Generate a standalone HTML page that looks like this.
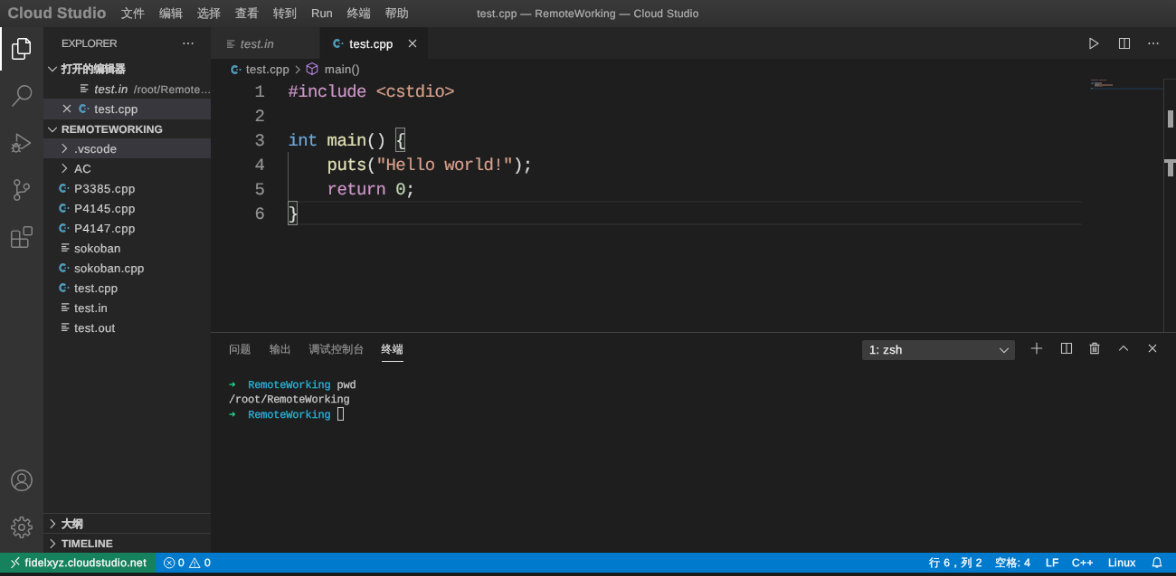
<!DOCTYPE html>
<html lang="zh">
<head>
<meta charset="utf-8">
<title>test.cpp — RemoteWorking — Cloud Studio</title>
<style>
*{box-sizing:border-box;margin:0;padding:0}
html,body{width:1176px;height:576px;overflow:hidden;background:#1b1b1b}
body{font-family:"Liberation Sans",sans-serif;font-size:13px;color:#ccc;-webkit-text-stroke:.18px}
#wb{position:absolute;left:0;top:0;width:1300px;height:637px;transform:scale(0.904615);transform-origin:0 0;background:#1b1b1b;overflow:hidden;will-change:transform;text-rendering:geometricPrecision}
.abs{position:absolute}
svg{display:block;position:absolute;overflow:visible}
/* title bar */
#title{left:0;top:0;width:1300px;height:30px;background:linear-gradient(#3a3a3a,#2f2f2f);color:#ccc}
#logo{left:8.5px;top:0;height:30px;line-height:30px;font-weight:bold;font-size:17px;letter-spacing:.28px;color:#8f8f8f;-webkit-text-stroke:.35px #8f8f8f;white-space:nowrap}
#menu{left:126px;top:0;height:30px;display:flex}
#menu div{padding:0 8px;line-height:30px;font-size:13px;color:#bdbdbd;white-space:nowrap}
#wtitle{left:0;top:0;width:1300px;text-align:center;line-height:30px;font-size:12px;letter-spacing:.3px;color:#b4b4b4}
/* activity bar */
#act{left:0;top:30px;width:48px;height:581px;background:#333}
#act svg{left:12px;width:24px;height:24px}
#act .on{position:absolute;left:0;top:0;width:2px;height:48px;background:#fff}
/* side bar */
#side{left:48px;top:30px;width:185px;height:581px;background:#252526;overflow:hidden}
.row{position:absolute;left:0;width:185px;height:22px;line-height:22px;white-space:nowrap;color:#ccc;font-size:13px;letter-spacing:.33px}
.row span{position:absolute;top:.6px}
.row svg{top:0}
.hd{font-weight:bold;font-size:12px;letter-spacing:.1px}
.sel{background:#37373d}
.bt{border-top:1px solid #3c3c3d}
/* editor */
#ed{left:233px;top:30px;width:1067px;height:336.7px;background:#1e1e1e;overflow:hidden}
#tabs{left:0;top:0;width:1067px;height:35px;background:#252526}
.tab{position:absolute;top:0;height:35px;line-height:35px;font-size:13px;letter-spacing:.33px;white-space:nowrap}
.tab span{position:absolute;top:1px}
#bc{left:0;top:35px;width:1067px;height:22px;line-height:22px;color:#a9a9a9;font-size:13px;letter-spacing:.33px;white-space:nowrap}
#bc span{position:absolute;top:1px}
#code{left:0;top:57px;width:1067px;height:281px;font-family:"Liberation Mono",monospace;font-size:19px;letter-spacing:-.6px;line-height:27px;color:#dcdcdc;white-space:pre;-webkit-text-stroke:.2px}
.ln{position:absolute;left:0;width:59.3px;margin-top:1.6px;text-align:right;color:#939393}
.cl{position:absolute;left:85.4px;margin-top:1.7px}
.k{color:#cd95c9}.s{color:#d69f8a}.b{color:#6ba8dc}.f{color:#e1e1b5}.n{color:#bed5b3}
.bm{position:absolute;width:10.8px;height:27px;border:1px solid #888;background:rgba(110,140,110,.1)}
/* panel */
#panel{left:233px;top:366.7px;width:1067px;height:244.3px;background:#1e1e1e;border-top:1px solid #414141}
#ptabs span{position:absolute;top:1.3px;line-height:35px;font-size:12px;letter-spacing:.2px;color:#969696;white-space:nowrap}
#term{left:20px;top:50.3px;font-family:"Liberation Mono",monospace;font-size:12px;letter-spacing:-.17px;line-height:16px;color:#ccc;white-space:pre;-webkit-text-stroke:.25px}
.g{color:#23d18b}.c{color:#29b8db}
/* status */
#status{left:0;top:611px;width:1300px;height:22px;background:#007acc;color:#fff;font-size:12px;letter-spacing:.4px;line-height:22px;white-space:nowrap;-webkit-text-stroke:.3px}
#status span{position:absolute;top:0}
</style>
</head>
<body>

<svg width="0" height="0" style="position:absolute">
<defs>
<symbol id="cpp" viewBox="0 0 16 22">
  <path d="M11.05 8.5A3.2 3.85 0 1 0 11.05 13.5" fill="none" stroke="#519aba" stroke-width="2.5"/>
  <path d="M10.3 11H11.9M11.1 10.2V11.8M13.4 11H15.6M14.5 9.9V12.1" stroke="#519aba" stroke-width="1.1"/>
</symbol>
<symbol id="txt" viewBox="0 0 16 22">
  <path d="M7 6.9H15.4M7 9.6H12.2M7 11.9H15.4M7 14.3H13.4" stroke="#c5c5c5" stroke-width="1.25"/>
</symbol>
<symbol id="txt2" viewBox="0 0 16 22">
  <path d="M7 6.9H15.4M7 9.6H12.2M7 11.9H15.4M7 14.3H13.4" stroke="#c5c5c5" stroke-width="1.05"/>
</symbol>
<symbol id="chd" viewBox="0 0 16 16">
  <path d="M3.2 5.8L8 10.6L12.8 5.8" fill="none" stroke="#c5c5c5" stroke-width="1.1"/>
</symbol>
<symbol id="chr" viewBox="0 0 16 16">
  <path d="M5.8 3.2L10.6 8L5.8 12.8" fill="none" stroke="#c5c5c5" stroke-width="1.1"/>
</symbol>
<symbol id="x" viewBox="0 0 16 16">
  <path d="M4 4L12 12M12 4L4 12" fill="none" stroke="#c5c5c5" stroke-width="1.1"/>
</symbol>
<symbol id="split" viewBox="0 0 16 16">
  <path d="M2.5 2.5H13.5V13.5H2.5ZM8 2.5V13.5" fill="none" stroke="#c5c5c5" stroke-width="1.1" stroke-linejoin="round"/>
</symbol>
</defs>
</svg>

<div id="wb">
<div id="title" class="abs">
<div id="wtitle" class="abs">test.cpp — RemoteWorking — Cloud Studio</div>
<div id="logo" class="abs">Cloud Studio</div>
<div id="menu" class="abs"><div>文件</div><div>编辑</div><div>选择</div><div>查看</div><div>转到</div><div>Run</div><div>终端</div><div>帮助</div></div>
</div>
<div id="act" class="abs"><div class="on"></div>
<svg style="top:12px" viewBox="0 0 24 24"><path fill="#fff" d="M17.5 0h-9L7 1.5V6H2.5L1 7.5v15.07L2.5 24h12.07L16 22.57V18h4.7l1.3-1.43V4.5L17.5 0zm0 2.12l2.38 2.38H17.5V2.12zm-3 20.38h-12v-15H7v9.07L8.5 18h6v4.5zm6-6h-12v-15H16V6h4.5v10.5z"/></svg>
<svg style="top:64px" viewBox="0 0 24 24"><path fill="#858585" d="M15.25 0a8.25 8.25 0 0 0-6.18 13.72L1 22.88l1.12 1.12 8.05-9.12A8.251 8.251 0 1 0 15.25.01V0zm0 15a6.75 6.75 0 1 1 0-13.5 6.75 6.75 0 0 1 0 13.5z"/></svg>
<svg style="top:116px" viewBox="0 0 24 24"><g fill="none" stroke="#858585" stroke-width="1.5" stroke-linejoin="round">
<path d="M6.5 10.5V2.2L21.5 12L11.5 18.6"/>
<ellipse cx="5.8" cy="17.8" rx="3.3" ry="4.1"/>
<path d="M3.2 16H8.8M0.6 17.8H3M9 17.8H11.4M1.2 13.6L3.4 15.2M10.8 13.6L8.6 15.2M1.2 22L3.6 20.2M10.8 22L8.4 20.2M4.2 13.8C4.4 12.2 7.6 12.2 7.8 13.8"/>
</g></svg>
<svg style="top:168px" viewBox="0 0 24 24"><path fill="#858585" d="M21.007 8.222A3.738 3.738 0 0 0 15.045 5.2a3.737 3.737 0 0 0 1.156 6.583 2.988 2.988 0 0 1-2.668 1.67h-2.99a4.456 4.456 0 0 0-2.989 1.165V7.4a3.737 3.737 0 1 0-1.494 0v9.117a3.776 3.776 0 1 0 1.816.099 2.99 2.99 0 0 1 2.668-1.667h2.99a4.484 4.484 0 0 0 4.223-3.039 3.736 3.736 0 0 0 3.25-3.687zM4.565 3.738a2.242 2.242 0 1 1 4.484 0 2.242 2.242 0 0 1-4.484 0zm4.484 16.441a2.242 2.242 0 1 1-4.484 0 2.242 2.242 0 0 1 4.484 0zm8.221-9.715a2.242 2.242 0 1 1 0-4.485 2.242 2.242 0 0 1 0 4.485z"/></svg>
<svg style="top:220px" viewBox="0 0 24 24"><path fill="#858585" d="M13.5 1.5L15 0h7.5L24 1.5V9l-1.5 1.5H15L13.5 9V1.5zm1.5 0V9h7.5V1.5H15zM0 15V6l1.5-1.5H9L10.5 6v7.5H18l1.5 1.5v7.5L18 24H1.5L0 22.5V15zm9-1.5V6H1.5v7.5H9zM9 15H1.5v7.5H9V15zm1.5 7.5H18V15h-7.5v7.5z"/></svg>
<svg style="top:489px" viewBox="0 0 24 24"><g fill="none" stroke="#858585" stroke-width="1.5">
<circle cx="12" cy="12" r="11.2"/><circle cx="12" cy="9.4" r="4.3"/><path d="M4.6 20.2C5.6 12.6 18.4 12.6 19.4 20.2"/></g></svg>
<svg style="top:541px" viewBox="0 0 24 24"><g fill="none" stroke="#858585" stroke-width="1.5" stroke-linejoin="round">
<path d="M19.94 9.96 L23.19 10.41 L23.19 13.59 L19.94 14.04 L19.06 16.17 L21.04 18.78 L18.78 21.04 L16.17 19.06 L14.04 19.94 L13.59 23.19 L10.41 23.19 L9.96 19.94 L7.83 19.06 L5.22 21.04 L2.96 18.78 L4.94 16.17 L4.06 14.04 L0.81 13.59 L0.81 10.41 L4.06 9.96 L4.94 7.83 L2.96 5.22 L5.22 2.96 L7.83 4.94 L9.96 4.06 L10.41 0.81 L13.59 0.81 L14.04 4.06 L16.17 4.94 L18.78 2.96 L21.04 5.22 L19.06 7.83Z"/><circle cx="12" cy="12" r="3.2"/></g></svg>
</div>
<div id="side" class="abs">
<div class="row" style="top:0;height:35px;line-height:35px;font-size:12px;letter-spacing:-.52px;color:#bbb"><span style="left:20px;top:1.2px">EXPLORER</span><svg style="left:152px;top:9.5px" width="16" height="16" viewBox="0 0 16 16"><g fill="#c5c5c5"><circle cx="3.4" cy="8" r="1"/><circle cx="8" cy="8" r="1"/><circle cx="12.6" cy="8" r="1"/></g></svg></div>
<div class="row hd" style="top:35px"><svg style="left:2px;top:3px" width="16" height="16" ><use href="#chd"/></svg><span style="left:20px;top:.1px;letter-spacing:-.2px">打开的编辑器</span></div>
<div class="row" style="top:57px"><svg style="left:34.3px;top:0px" width="16" height="22" ><use href="#txt"/></svg><span style="left:56.5px;font-style:italic">test.in</span><span style="left:100px;font-size:12px;color:#a3a3a3;letter-spacing:.35px">/root/Remote…</span></div>
<div class="row sel" style="top:79px"><svg style="left:18px;top:3px" width="16" height="16" ><use href="#x"/></svg><svg style="left:34.5px;top:0px" width="16" height="22" ><use href="#cpp"/></svg><span style="left:56.5px">test.cpp</span></div>
<div class="row hd bt" style="top:101px"><svg style="left:2px;top:3px" width="16" height="16" ><use href="#chd"/></svg><span style="left:20px;top:.3px">REMOTEWORKING</span></div>
<div class="row sel" style="top:123px"><svg style="left:14.8px;top:3px" width="16" height="16" ><use href="#chr"/></svg><span style="left:34.2px">.vscode</span></div>
<div class="row" style="top:145px"><svg style="left:14.8px;top:3px" width="16" height="16" ><use href="#chr"/></svg><span style="left:34.2px">AC</span></div>
<div class="row" style="top:167px"><svg style="left:12.7px;top:0px" width="16" height="22" ><use href="#cpp"/></svg><span style="left:34.2px;letter-spacing:.62px">P3385.cpp</span></div>
<div class="row" style="top:189px"><svg style="left:12.7px;top:0px" width="16" height="22" ><use href="#cpp"/></svg><span style="left:34.2px;letter-spacing:.62px">P4145.cpp</span></div>
<div class="row" style="top:211px"><svg style="left:12.7px;top:0px" width="16" height="22" ><use href="#cpp"/></svg><span style="left:34.2px;letter-spacing:.62px">P4147.cpp</span></div>
<div class="row" style="top:233px"><svg style="left:13.0px;top:0px" width="16" height="22" ><use href="#txt"/></svg><span style="left:34.2px">sokoban</span></div>
<div class="row" style="top:255px"><svg style="left:12.7px;top:0px" width="16" height="22" ><use href="#cpp"/></svg><span style="left:34.2px">sokoban.cpp</span></div>
<div class="row" style="top:277px"><svg style="left:12.7px;top:0px" width="16" height="22" ><use href="#cpp"/></svg><span style="left:34.2px">test.cpp</span></div>
<div class="row" style="top:299px"><svg style="left:13.0px;top:0px" width="16" height="22" ><use href="#txt"/></svg><span style="left:34.2px">test.in</span></div>
<div class="row" style="top:321px"><svg style="left:13.0px;top:0px" width="16" height="22" ><use href="#txt"/></svg><span style="left:34.2px">test.out</span></div>
<div class="row hd bt" style="top:537.4px"><svg style="left:2px;top:3px" width="16" height="16" ><use href="#chr"/></svg><span style="left:20px;top:-.4px">大纲</span></div>
<div class="row hd bt" style="top:559.4px"><svg style="left:2px;top:3px" width="16" height="16" ><use href="#chr"/></svg><span style="left:20px;top:-.3px">TIMELINE</span></div>
</div>
<div id="ed" class="abs">
<div id="tabs" class="abs">
<div class="tab" style="left:0;width:119.5px;background:#2c2c2c;color:#999"><svg style="left:11px;top:7.5px" width="16" height="22" opacity=".7"><use href="#txt2"/></svg><span style="left:33px;font-style:italic">test.in</span></div>
<div class="tab" style="left:120.5px;width:119px;background:#1e1e1e;color:#fff"><svg style="left:10.5px;top:7px" width="16" height="22" ><use href="#cpp"/></svg><span style="left:33px">test.cpp</span><svg style="left:94px;top:9.5px" width="16" height="16" ><use href="#x"/></svg></div>
<svg style="left:968px;top:9.5px" width="16" height="16" viewBox="0 0 16 16"><path d="M4 2.3L13 8L4 13.7Z" fill="none" stroke="#c5c5c5" stroke-width="1.1" stroke-linejoin="round"/></svg>
<svg style="left:1001.5px;top:9.5px" width="16" height="16" ><use href="#split"/></svg>
<svg style="left:1033.5px;top:9.5px" width="16" height="16" viewBox="0 0 16 16"><g fill="#c5c5c5"><circle cx="3.4" cy="8" r="1"/><circle cx="8" cy="8" r="1"/><circle cx="12.6" cy="8" r="1"/></g></svg>
</div>
<div id="bc" class="abs">
<svg style="left:17.5px;top:0.5px" width="16" height="22" ><use href="#cpp"/></svg>
<span style="left:39px">test.cpp</span>
<svg style="left:88px;top:3.5px" width="16" height="16" viewBox="0 0 16 16" opacity=".75"><path d="M6 3.8L10.2 8L6 12.2" fill="none" stroke="#c5c5c5" stroke-width="1.1"/></svg>
<svg style="left:104px;top:3.3px" width="16" height="16" viewBox="0 0 16 16"><path d="M8 1.6L13.8 4.6V11.2L8 14.4L2.2 11.2V4.6ZM2.4 4.7L8 7.7L13.6 4.7M8 7.7V14.2" fill="none" stroke="#b180d7" stroke-width="1.1" stroke-linejoin="round"/></svg>
<span style="left:126px">main()</span>
</div>
<div id="code" class="abs">
<div class="abs" style="left:85.4px;top:135px;width:878px;height:27px;border-top:2px solid #282828;border-bottom:2px solid #282828"></div>
<div class="abs" style="left:85.4px;top:81px;width:1px;height:54px;background:#585858"></div>
<div class="bm" style="left:204.2px;top:54px"></div>
<div class="bm" style="left:85.4px;top:135px"></div>
<div class="ln" style="top:0px">1</div><div class="cl" style="top:0px"><span class="k">#include</span> <span class="s">&lt;cstdio&gt;</span></div>
<div class="ln" style="top:27px">2</div><div class="cl" style="top:27px"></div>
<div class="ln" style="top:54px">3</div><div class="cl" style="top:54px"><span class="b">int</span> <span class="f">main</span>() {</div>
<div class="ln" style="top:81px">4</div><div class="cl" style="top:81px">    <span class="f">puts</span>(<span class="s">"Hello world!"</span>);</div>
<div class="ln" style="top:108px">5</div><div class="cl" style="top:108px">    <span class="k">return</span> <span class="n">0</span>;</div>
<div class="ln" style="top:135px">6</div><div class="cl" style="top:135px">}</div>
</div>
<div class="abs" style="left:972px;top:57px;width:81px;height:281px"><div class="abs" style="left:0;top:9.5px;width:81px;height:2px;background:#264f78;opacity:.3"></div><div class="abs" style="left:1px;top:.5px;width:8px;height:1.5px;background:#c586c0;opacity:.38"></div><div class="abs" style="left:10px;top:.5px;width:8px;height:1.5px;background:#ce9178;opacity:.38"></div><div class="abs" style="left:1px;top:4.3px;width:3px;height:1.4px;background:#569cd6;opacity:.38"></div><div class="abs" style="left:5px;top:4.3px;width:8px;height:1.4px;background:#d4d4d4;opacity:.3"></div><div class="abs" style="left:5px;top:6.2px;width:5px;height:1.4px;background:#dcdcaa;opacity:.38"></div><div class="abs" style="left:10px;top:6.2px;width:15px;height:1.4px;background:#ce9178;opacity:.38"></div><div class="abs" style="left:5px;top:8.1px;width:9px;height:1.4px;background:#c586c0;opacity:.3"></div><div class="abs" style="left:1px;top:10px;width:2px;height:1.4px;background:#d4d4d4;opacity:.3"></div></div>
<div class="abs" style="left:1053px;top:57px;width:14px;height:281px;border-left:1px solid #3a3a3a;border-top:1px solid #333"><div class="abs" style="left:4px;top:34px;width:6px;height:19px;background:#a0a0a0"></div><div class="abs" style="left:0;top:88px;width:14px;height:4px;background:#a0a0a0"></div><div class="abs" style="left:4px;top:88px;width:6px;height:19px;background:#a0a0a0"></div></div>
</div>
<div id="panel" class="abs">
<div id="ptabs" class="abs" style="left:0;top:0;width:1067px;height:35px"><span style="left:20.3px">问题</span><span style="left:64.9px">输出</span><span style="left:108.6px">调试控制台</span><span style="left:188.5px;color:#e7e7e7">终端</span><div class="abs" style="left:188.5px;top:31.3px;width:24.5px;height:1px;background:#e7e7e7"></div></div>
<div class="abs" style="left:720px;top:8px;width:169px;height:22px;background:#3c3c3c;border-radius:2px;color:#f0f0f0;-webkit-text-stroke:.25px;line-height:22px;font-size:13px;letter-spacing:.3px"><span class="abs" style="left:8px;top:0">1: zsh</span><svg style="left:149px;top:3.5px" width="16" height="16" ><use href="#chd"/></svg></div>
<svg style="left:905px;top:9.5px" width="16" height="16" viewBox="0 0 16 16"><path d="M8 1.8V14.2M1.8 8H14.2" fill="none" stroke="#c5c5c5" stroke-width="1.1"/></svg>
<svg style="left:937.5px;top:9.5px" width="16" height="16" ><use href="#split"/></svg>
<svg style="left:968.5px;top:9.5px" width="16" height="16" viewBox="0 0 16 16"><path d="M3.8 4.6H12.2V13.6H3.8ZM2.6 4.4H13.4M6 4.2V2.4H10V4.2M6.4 6.4V12M8 6.4V12M9.6 6.4V12" fill="none" stroke="#c5c5c5" stroke-width="1.1"/></svg>
<svg style="left:1000.5px;top:9.5px" width="16" height="16" viewBox="0 0 16 16"><path d="M3.2 10.4L8 5.6L12.8 10.4" fill="none" stroke="#c5c5c5" stroke-width="1.1"/></svg>
<svg style="left:1032.5px;top:9.5px" width="16" height="16" ><use href="#x"/></svg>
<div id="term" class="abs"><span class="g">➜</span>  <span class="c">RemoteWorking</span> pwd
/root/RemoteWorking
<span class="g">➜</span>  <span class="c">RemoteWorking</span> <span style="display:inline-block;width:7px;height:15px;border:1px solid #ccc;vertical-align:-3.5px"></span></div>
</div>
<div id="status" class="abs">
<div class="abs" style="left:0;top:0;width:172px;height:22px;background:#16825d"></div>
<svg style="left:0;top:0" width="32" height="22" viewBox="0 0 32 22"><path d="M12.6 8.4L16.6 12.6L12.6 16.8M21.2 5L17.1 9.15L21.2 13.3" fill="none" stroke="#fff" stroke-width="1.1"/></svg>
<span style="left:27.8px;letter-spacing:.42px">fidelxyz.cloudstudio.net</span>
<svg style="left:179.8px;top:4px" width="14.4" height="14.4" viewBox="0 0 16 16"><g fill="none" stroke="#fff" stroke-width="1.1"><circle cx="8" cy="8" r="6.4"/><path d="M5.4 5.4L10.6 10.6M10.6 5.4L5.4 10.6"/></g></svg>
<span style="left:197px">0</span>
<svg style="left:208.2px;top:4px" width="14.4" height="14.4" viewBox="0 0 16 16"><g fill="none" stroke="#fff" stroke-width="1.1" stroke-linejoin="round"><path d="M8 2L14.6 13.8H1.4Z"/><path d="M8 6.4V10.2M8 11.2V12.4"/></g></svg>
<span style="left:226px">0</span>
<span style="left:1027px">行 6，列 2</span>
<span style="left:1100px">空格: 4</span>
<span style="left:1156px">LF</span>
<span style="left:1185px">C++</span>
<span style="left:1225px">Linux</span>
<svg style="left:1271px;top:3px" width="16" height="16" viewBox="0 0 16 16"><path d="M3.2 11.6C4.4 10.4 4.2 8.6 4.4 6.4C4.6 3.8 6.2 2.6 8 2.6C9.8 2.6 11.4 3.8 11.6 6.4C11.8 8.6 11.6 10.4 12.8 11.6ZM6.6 12C6.8 13.6 9.2 13.6 9.4 12" fill="none" stroke="#fff" stroke-width="1.1" stroke-linejoin="round"/></svg>
</div>
</div>
</body>
</html>
